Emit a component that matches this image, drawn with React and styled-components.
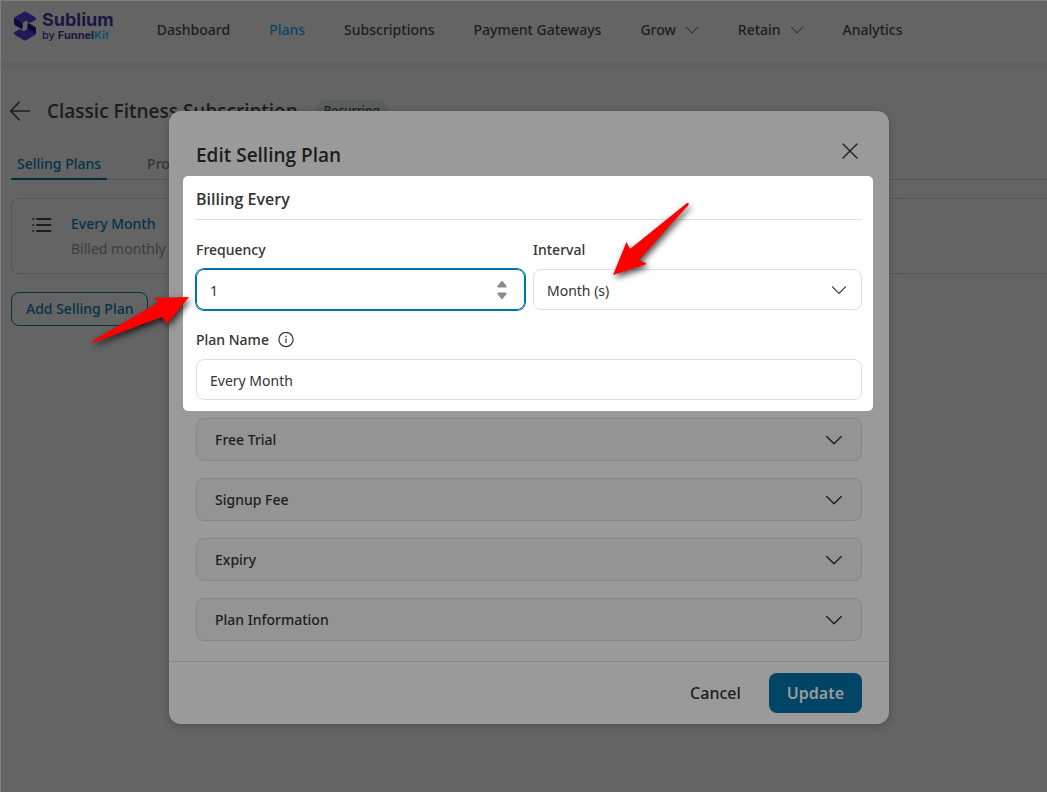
import React, { useState } from "react";
import styled, { createGlobalStyle } from "styled-components";

export default function App() {
  const [frequency, setFrequency] = useState(1);
  const [planName, setPlanName] = useState("Every Month");
  const [interval, setInterval] = useState("month");

  return (
    <>
      <GlobalStyle />
      <Page>
        <TopBar>
          <Logo href="#">
            <LogoMark />
            <LogoText>
              <LogoName>Sublium</LogoName>
              <LogoBy>
                by <b>Funnel</b>
                <LogoKit>Kit</LogoKit>
              </LogoBy>
            </LogoText>
          </Logo>
          <Nav>
            <NavLink href="#">Dashboard</NavLink>
            <NavLink href="#" $active>
              Plans
            </NavLink>
            <NavLink href="#">Subscriptions</NavLink>
            <NavLink href="#">Payment Gateways</NavLink>
            <NavLink href="#">
              Grow <Chevron size={14} stroke={1} />
            </NavLink>
            <NavLink href="#">
              Retain <Chevron size={14} stroke={1} />
            </NavLink>
            <NavLink href="#">Analytics</NavLink>
          </Nav>
        </TopBar>

        <Content>
          <TitleRow>
            <BackButton type="button" aria-label="Back">
              <svg width="21" height="20" viewBox="0 0 21 20" fill="none" stroke="currentColor" strokeWidth="1.6" strokeLinecap="round" strokeLinejoin="round">
                <path d="M9 1.2 0.8 10 9 18.8M1 10H19.500" />
              </svg>
            </BackButton>
            <PlanTitle>Classic Fitness Subscription</PlanTitle>
            <Badge>Recurring</Badge>
          </TitleRow>

          <Tabs>
            <Tab type="button" $active>
              Selling Plans
            </Tab>
            <Tab type="button">Products</Tab>
          </Tabs>

          <PlanCard>
            <svg width="20" height="16" viewBox="0 0 20 16" stroke="currentColor" strokeWidth="1.8" strokeLinecap="round">
              <path d="M5 2H18.5M5 8H18.5M5 14H18.5M1.2 2h.2M1.2 8h.2M1.2 14h.2" />
            </svg>
            <div>
              <PlanLink href="#">Every Month</PlanLink>
              <PlanMeta>Billed monthly</PlanMeta>
            </div>
          </PlanCard>

          <AddButton type="button">Add Selling Plan</AddButton>
        </Content>
      </Page>

      <Overlay>
        <Modal role="dialog" aria-labelledby="modal-title">
          <ModalHeader>
            <ModalTitle id="modal-title">Edit Selling Plan</ModalTitle>
            <CloseButton type="button" aria-label="Close">
              <svg width="16" height="16" viewBox="0 0 16 16" stroke="currentColor" strokeWidth="1.4" strokeLinecap="round">
                <path d="M1 1 15 15M15 1 1 15" />
              </svg>
            </CloseButton>
          </ModalHeader>

          <Spotlight>
            <SectionTitle>Billing Every</SectionTitle>
            <FieldRow>
              <Field>
                <Label htmlFor="frequency">Frequency</Label>
                <Control $focused>
                  <Input
                    id="frequency"
                    type="number"
                    value={frequency}
                    onChange={(e) => setFrequency(Number(e.target.value))}
                  />
                  <Stepper>
                    <StepButton type="button" aria-label="Increase" onClick={() => setFrequency(frequency + 1)}>
                      <svg width="12" height="8" viewBox="0 0 12 8">
                        <path d="M6 0.5 10.6 6Q11 7.5 9.6 7.5H2.4Q1 7.5 1.4 6Z" fill="#8b8b8b" />
                      </svg>
                    </StepButton>
                    <StepButton type="button" aria-label="Decrease" onClick={() => setFrequency(frequency - 1)}>
                      <svg width="12" height="8" viewBox="0 0 12 8">
                        <path d="M6 7.5 10.6 2Q11 0.5 9.6 0.5H2.4Q1 0.5 1.4 2Z" fill="#8b8b8b" />
                      </svg>
                    </StepButton>
                  </Stepper>
                </Control>
              </Field>
              <Field>
                <Label htmlFor="interval">Interval</Label>
                <Control>
                  <Select id="interval" value={interval} onChange={(e) => setInterval(e.target.value)}>
                    <option value="day">Day (s)</option>
                    <option value="week">Week (s)</option>
                    <option value="month">Month (s)</option>
                    <option value="year">Year (s)</option>
                  </Select>
                  <SelectIcon>
                    <Chevron size={16} stroke={1.2} />
                  </SelectIcon>
                </Control>
              </Field>
            </FieldRow>
            <Field>
              <Label htmlFor="plan-name">
                Plan Name
                <svg width="16" height="16" viewBox="0 0 16 16" fill="none" stroke="currentColor" strokeWidth="1.2">
                  <circle cx="8" cy="7.500" r="7.1" />
                  <path d="M8 6.500v4.6M8 3.700v1.5" />
                </svg>
              </Label>
              <Control>
                <Input id="plan-name" type="text" value={planName} onChange={(e) => setPlanName(e.target.value)} />
              </Control>
            </Field>
          </Spotlight>

          <Sections>
            {["Free Trial", "Signup Fee", "Expiry", "Plan Information"].map((name) => (
              <SectionButton key={name} type="button" aria-expanded="false">
                {name}
                <Chevron size={18} stroke={1.2} />
              </SectionButton>
            ))}
          </Sections>

          <ModalFooter>
            <CancelButton type="button">Cancel</CancelButton>
            <UpdateButton type="button">Update</UpdateButton>
          </ModalFooter>
        </Modal>
      </Overlay>

      <Arrows viewBox="0 0 620 160" aria-hidden="true">
        <path d="M109 107 73 108 79 112 13 150.5Q11.5 153 14 152.5L82 127 87 134Z" />
        <path d="M533 85 546.5 52 550 59 607 13Q609.500 12.500 608.500 15L559 70 567 74Z" />
      </Arrows>
    </>
  );
}

function Chevron({ size, stroke }) {
  return (
    <svg width={size} height={size} viewBox="0 0 16 16" fill="none" stroke="currentColor" strokeWidth={stroke} strokeLinecap="round" strokeLinejoin="round">
      <path d="M1.500 4.800 8 11.300 14.500 4.800" />
    </svg>
  );
}

function LogoMark() {
  return (
    <svg width="24" height="32" viewBox="0 0 24 32">
      <path d="M1 8.500Q1 7.500 2 7L11 1.700Q12 1.200 13 1.700L22 7Q24 8.500 22.500 10L18.500 12.300Q17 13 15.500 12.200L13 10.800 9.500 13V18L2.500 13.500Q1 12 1 10Z" fill="#211959" />
      <path d="M1 8.500 9.500 13V19.500L2 15.200Q1 14.500 1 13Z" fill="#0f0935" />
      <path d="M23 23.500Q23 24.500 22 25L13 30.300Q12 30.800 11 30.300L2 25Q0 23.500 1.500 22L5.500 19.700Q7 19 8.500 19.800L11 21.200 14.500 19V14L21.500 18.500Q23 20 23 22Z" fill="#211959" />
      <path d="M23 23.500 14.500 19V12.500L22 16.800Q23 17.500 23 19Z" fill="#0f0935" />
    </svg>
  );
}

/* ========== styles ========== */

const GlobalStyle = createGlobalStyle`
  * {
    box-sizing: border-box;
  }

  body {
    margin: 0;
    background: #646464;
    font-family: "Noto Sans", "Open Sans", sans-serif;
    font-size: 14px;
    line-height: 20px;
    color: #1c1c1c;
  }

  h1, h2, h3 {
    margin: 0;
    font-family: "Open Sans", "Noto Sans", sans-serif;
    font-weight: 600;
  }

  button, input, select {
    font: inherit;
    color: inherit;
    margin: 0;
    padding: 0;
    border: none;
    background: none;
  }

  a {
    color: inherit;
    text-decoration: none;
  }

  svg {
    flex-shrink: 0;
  }
`;

const Page = styled.div`
  min-height: 100vh;
  overflow: hidden;
  border-top: 1px solid #808080;
  border-left: 1px solid #808080;
`;

const TopBar = styled.header`
  display: flex;
  align-items: flex-start;
  gap: 43px;
  height: 63px;
  padding: 9px 12px 0;
  border-bottom: 1px solid #5e5e5e;
  box-shadow: 0 1px 3px rgba(0, 0, 0, 0.08);
`;

const Logo = styled.a`
  display: flex;
  gap: 5px;
  font-family: Inter, sans-serif;
`;

const LogoText = styled.span`
  display: flex;
  flex-direction: column;
`;

const LogoName = styled.span`
  font-size: 18px;
  line-height: 19px;
  font-weight: 700;
  color: #1a1640;
`;

const LogoBy = styled.span`
  font-size: 11px;
  line-height: 12px;
  font-weight: 500;
  color: #1a1640;
`;

const LogoKit = styled.b`
  color: #15506e;
`;

const Nav = styled.nav`
  display: flex;
  gap: 39px;
  padding-top: 10px;
`;

const NavLink = styled.a`
  display: flex;
  align-items: center;
  gap: 9px;
  font-weight: 500;
  white-space: nowrap;
  color: ${({ $active }) => ($active ? "#0a4464" : "#1c1c1c")};
`;

const Content = styled.main`
  padding: 33px 0 0 9px;
`;

const TitleRow = styled.div`
  display: flex;
  align-items: center;
`;

const BackButton = styled.button`
  display: flex;
  margin-right: 16px;
`;

const PlanTitle = styled.h1`
  font-size: 19px;
  line-height: 28px;
`;

const Badge = styled.span`
  margin-left: 17px;
  padding: 1px 9px;
  border-radius: 12px;
  font-size: 12px;
  font-weight: 500;
  background: #5b5e5f;
`;

const Tabs = styled.div`
  display: flex;
  gap: 34px;
  margin: 25px 0 0 1px;
  border-bottom: 1px solid #575757;
`;

const Tab = styled.button`
  height: 30px;
  margin-bottom: -1px;
  padding: 0 6px 1px;
  font-weight: 500;
  color: ${({ $active }) => ($active ? "#03314a" : "#333333")};
  border-bottom: 2px solid ${({ $active }) => ($active ? "#002d43" : "transparent")};
`;

const PlanCard = styled.div`
  display: flex;
  gap: 19px;
  margin: 18px -16px 0 1px;
  padding: 15px 20px 14px;
  border: 1px solid #575759;
  border-radius: 8px;

  svg {
    margin-top: 3px;
  }
`;

const PlanLink = styled.a`
  font-weight: 500;
  color: #03314a;
`;

const PlanMeta = styled.div`
  margin-top: 5px;
  color: #3c3c3c;
`;

const AddButton = styled.button`
  height: 34px;
  margin: 18px 0 0 1px;
  padding: 0 14px;
  border: 1px solid #03314a;
  border-radius: 8px;
  font-weight: 500;
  color: #03314a;
`;

const Overlay = styled.div`
  position: absolute;
  top: 0;
  left: 0;
  right: 0;
  display: flex;
  justify-content: center;
  padding: 111px 0 0 11px;
`;

const Modal = styled.section`
  width: 100%;
  max-width: 720px;
  border-radius: 12px;
  background: #9a9a9a;
  box-shadow: 0 2px 8px rgba(0, 0, 0, 0.2);
`;

const ModalHeader = styled.div`
  display: flex;
  justify-content: space-between;
  align-items: center;
  height: 65px;
  padding: 22px 31px 0 27px;
`;

const ModalTitle = styled.h2`
  font-size: 19px;
  line-height: 28px;
`;

const CloseButton = styled.button`
  display: flex;
  margin-bottom: 8px;
`;

const Spotlight = styled.div`
  display: flex;
  flex-direction: column;
  gap: 20px;
  margin: 0 16px 0 14px;
  padding: 10px 11px 11px 13px;
  border-radius: 5px;
  background: #ffffff;
  color: #333333;
`;

const SectionTitle = styled.h3`
  padding-bottom: 7px;
  border-bottom: 1px solid #dedee8;
  font-size: 16px;
  line-height: 26px;
`;

const FieldRow = styled.div`
  display: grid;
  grid-template-columns: 1fr 1fr;
  gap: 8px;
`;

const Field = styled.div`
  display: flex;
  flex-direction: column;
  gap: 9px;
`;

const Label = styled.label`
  display: flex;
  align-items: center;
  gap: 9px;
  font-weight: 500;
`;

const Control = styled.div`
  position: relative;
  display: flex;
  align-items: center;
  height: 41px;
  border: 1px solid ${({ $focused }) => ($focused ? "#0073aa" : "#dedee8")};
  border-radius: 8px;
  box-shadow: ${({ $focused }) => ($focused ? "0 0 0 1px #0073aa" : "none")};
`;

const Input = styled.input`
  flex: 1;
  min-width: 0;
  height: 100%;
  padding: 2px 13px 0;
  outline: none;
  appearance: textfield;

  &::-webkit-inner-spin-button {
    display: none;
  }
`;

const Stepper = styled.div`
  display: flex;
  flex-direction: column;
  gap: 4px;
  padding-right: 16px;
`;

const StepButton = styled.button`
  display: flex;
`;

const Select = styled.select`
  width: 100%;
  height: 100%;
  padding: 2px 40px 0 13px;
  appearance: none;
  outline: none;
`;

const SelectIcon = styled.span`
  position: absolute;
  right: 14px;
  display: flex;
  pointer-events: none;
`;

const Sections = styled.div`
  display: flex;
  flex-direction: column;
  gap: 17px;
  padding: 7px 27px 20px;
`;

const SectionButton = styled.button`
  display: flex;
  justify-content: space-between;
  align-items: center;
  height: 43px;
  padding: 0 18px;
  border: 1px solid #86868d;
  border-radius: 8px;
  background: #949494;
  font-weight: 500;
`;

const ModalFooter = styled.div`
  display: flex;
  justify-content: flex-end;
  align-items: center;
  gap: 28px;
  height: 63px;
  padding: 0 27px;
  border-top: 1px solid #86868a;
`;

const CancelButton = styled.button`
  font-size: 16px;
  font-weight: 500;
`;

const UpdateButton = styled.button`
  height: 40px;
  padding: 0 18px;
  border-radius: 8px;
  background: #004566;
  color: #9a9a9a;
  font-size: 16px;
  font-weight: 600;
`;

/* callout arrows floating over the dialog */
const Arrows = styled.svg`
  position: absolute;
  top: 190px;
  left: calc(50% - 444px);
  width: 620px;
  height: 160px;
  fill: #ff0000;
  filter: drop-shadow(2px 3px 3px rgba(0, 0, 0, 0.7));
  pointer-events: none;
`;
